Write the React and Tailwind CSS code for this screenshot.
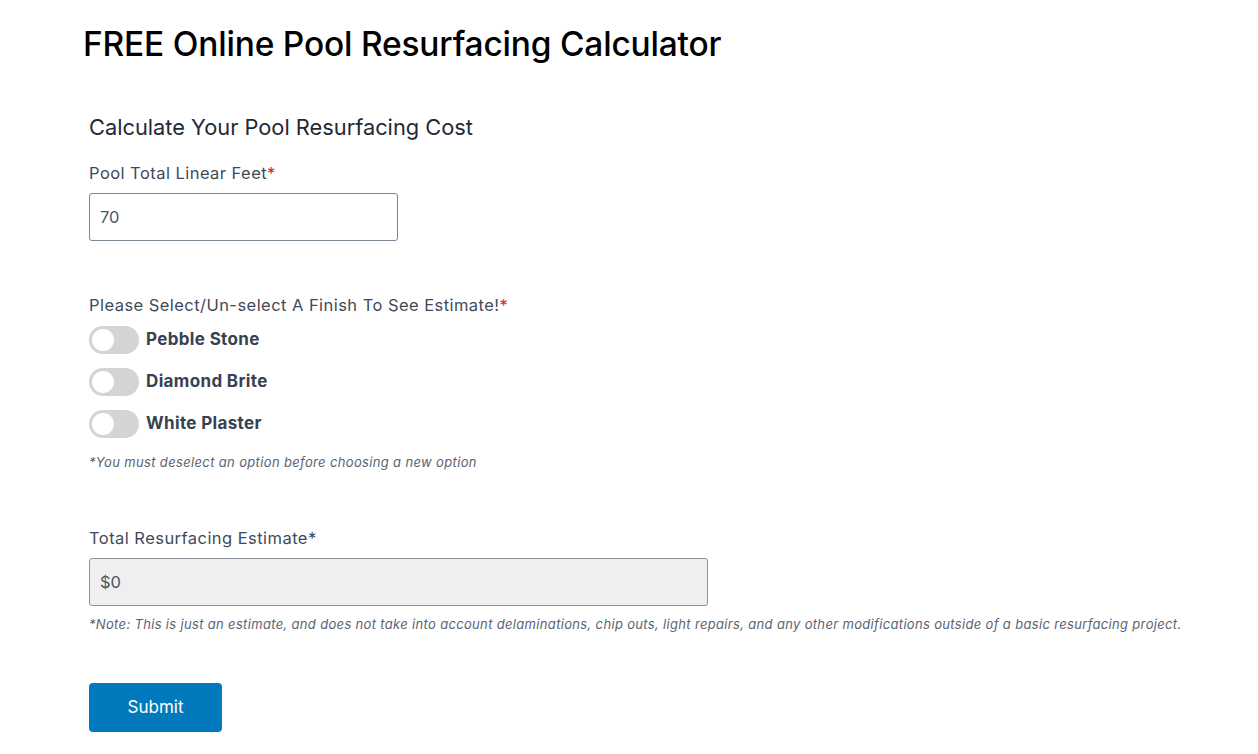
import { useState } from 'react';

const finishes = ['Pebble Stone', 'Diamond Brite', 'White Plaster'];

function Toggle({ on, onClick, label }) {
    return (
        <button type="button" onClick={onClick} className="flex items-center h-[42px] text-left">
            <span className={`relative w-[50px] h-[28px] rounded-full ${on ? 'bg-[#0079bd]' : 'bg-[#d4d4d4]'}`}>
                <span className={`absolute top-[3px] w-[22px] h-[22px] rounded-full bg-white ${on ? 'left-[25px]' : 'left-[3px]'}`}></span>
            </span>
            <span className="ml-[7px] text-[17px] font-bold text-[#374151] tracking-[0.35px]">{label}</span>
        </button>
    );
}

export default function App() {
    const [feet, setFeet] = useState('70');
    const [selected, setSelected] = useState(null);

    return (
        <div className="min-h-screen bg-white font-['Inter',sans-serif] text-[#374151]">
            <div className="pl-[83px] pt-[24px]">
                <h1 className="text-[33.5px] leading-[40px] font-medium text-black tracking-[-0.2px]">FREE Online Pool Resurfacing Calculator</h1>
            </div>

            <form className="pl-[89px] pt-[48px]" onSubmit={(e) => e.preventDefault()}>
                <h2 className="text-[21.8px] leading-[30px] text-[#1f2937]">Calculate Your Pool Resurfacing Cost</h2>

                <label className="block mt-[19px] text-[16.5px] leading-[24px] text-[#3f4a5a] tracking-[0.45px]">
                    Pool Total Linear Feet<span className="text-[#e11d1d]">*</span>
                </label>
                <input
                    value={feet}
                    onChange={(e) => setFeet(e.target.value)}
                    className="mt-[8px] block w-[309px] h-[48px] px-[10px] border border-[#7c8794] rounded-[3px] text-[16.5px] text-[#4b5563] outline-none"
                />

                <div className="mt-[52px] text-[16.5px] leading-[24px] text-[#3f4a5a] tracking-[0.45px]">
                    Please Select/Un-select A Finish To See Estimate!<span className="text-[#e11d1d]">*</span>
                </div>
                <div className="flex flex-col items-start mt-[2px]">
                    {finishes.map((f) => (
                        <Toggle
                            key={f}
                            label={f}
                            on={selected === f}
                            onClick={() => setSelected(selected === f ? null : f)}
                        />
                    ))}
                </div>
                <p className="mt-[8px] text-[13px] leading-[18px] italic text-[#5b6472] tracking-[0.35px]">*You must deselect an option before choosing a new option</p>

                <label className="block mt-[55px] text-[16.5px] leading-[24px] text-[#3f4a5a] tracking-[0.45px]">Total Resurfacing Estimate*</label>
                <input
                    readOnly
                    value="$0"
                    className="mt-[8px] block w-[619px] h-[48px] px-[10px] border border-[#8a929c] rounded-[3px] bg-[#efefef] text-[16.5px] text-[#4b5563] outline-none"
                />
                <p className="mt-[9px] text-[13px] leading-[18px] italic text-[#5b6472] tracking-[0.33px]">
                    *Note: This is just an estimate, and does not take into account delaminations, chip outs, light repairs, and any other modifications outside of a basic resurfacing project.
                </p>

                <button type="submit" className="mt-[50px] w-[133px] h-[49px] rounded-[4px] bg-[#0079bd] text-white text-[17px]">Submit</button>
            </form>
        </div>
    );
}
